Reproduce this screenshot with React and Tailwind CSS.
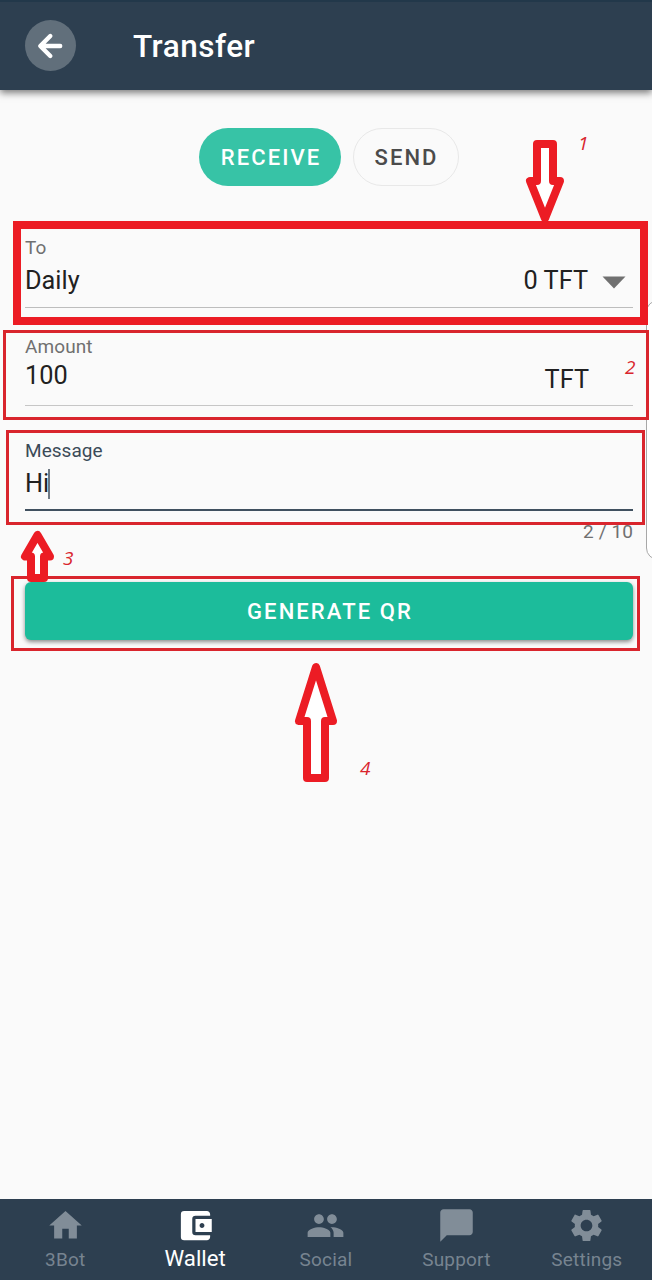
import React from "react";
import { MdHome, MdAccountBalanceWallet, MdPeople, MdChatBubble, MdSettings } from "react-icons/md";

const tabs = [
  { label: "3Bot", Icon: MdHome },
  { label: "Wallet", Icon: MdAccountBalanceWallet, active: true },
  { label: "Social", Icon: MdPeople },
  { label: "Support", Icon: MdChatBubble },
  { label: "Settings", Icon: MdSettings },
];

const numberClass = "absolute font-['Open_Sans',sans-serif] text-[19px] leading-[24px] italic text-[#d9252d]";

function Header() {
  return (
    <header className="relative flex h-[90px] shrink-0 items-center border-t-2 border-[#22384a] bg-[#2d3f50] pl-[25px] shadow-[0_3px_7px_rgba(0,0,0,0.5)]">
      <button className="-mt-px flex size-[51px] items-center justify-center rounded-full bg-[#616f7b]">
        <svg className="-ml-px" width="28" height="28" viewBox="0 0 28 28" fill="none" stroke="white" strokeWidth="4.4" strokeLinecap="round" strokeLinejoin="round">
          <path d="M14.3 4 4.3 14 14.3 24M5 14H24.2" />
        </svg>
      </button>
      <h1 className="mt-px ml-[57px] text-[31.5px] leading-[36px] font-medium tracking-[0.5px] text-white">Transfer</h1>
    </header>
  );
}

function Annotations() {
  return (
    <div className="pointer-events-none absolute inset-0 overflow-hidden">
      <div className="absolute top-[300px] left-[646px] h-[260px] w-[40px] rounded-[12px] border border-[#a8a8a8] bg-white" />
      <div className="absolute top-[221px] left-[13px] h-[104px] w-[635px] border-8 border-[#ec1c24]" />
      <div className="absolute top-[330px] left-[3px] h-[90px] w-[646px] border-3 border-[#d9252d]" />
      <div className="absolute top-[430px] left-[6px] h-[95px] w-[639px] border-3 border-[#d9252d]" />
      <div className="absolute top-[576px] left-[11px] h-[75px] w-[629px] border-3 border-[#d9252d]" />
      <svg className="absolute inset-0" width="652" height="1280" fill="#ffffff" stroke="#ec1c24" strokeWidth="8" strokeLinejoin="round">
        <path d="M537 144H553V181H560L545 218.5L530 181H537Z" />
        <path d="M37.5 535 25 556.5H31V578H44V556.5H50Z" />
        <path d="M316 667 299 721H307V778H325V721H333Z" />
      </svg>
      <span className={numberClass + " top-[131px] left-[578px]"}>1</span>
      <span className={numberClass + " top-[355px] left-[625px]"}>2</span>
      <span className={numberClass + " top-[546px] left-[63px]"}>3</span>
      <span className={numberClass + " top-[756px] left-[360px]"}>4</span>
    </div>
  );
}

export default function App() {
  return (
    <div className="relative flex h-[1280px] w-[652px] flex-col overflow-hidden bg-[#fafafa] font-[Roboto,sans-serif] text-[#212121]">
      <Header />
      <main className="flex grow flex-col pt-[38px] pr-[19px] pl-[25px]">
        <div className="flex gap-[12px] pl-[174px] text-[22px] font-medium tracking-[2.05px]">
          <button className="flex h-[58px] w-[142px] items-center justify-center rounded-full bg-[#37c3a6] pl-[2px] text-white">RECEIVE</button>
          <button className="flex h-[58px] w-[106px] items-center justify-center rounded-full border border-[#e8e8e8] pl-px text-[#4b4b4b]">SEND</button>
        </div>

        <div className="mt-[51px] flex h-[71px] flex-col border-b border-[#bdbdbd]">
          <label className="text-[19px] leading-[22px] text-[#707070]">To</label>
          <div className="mt-[7px] flex items-center text-[25.3px] leading-[30px]">
            <span className="grow">Daily</span>
            <span>0 TFT</span>
            <svg className="mt-[3px] mr-[7px] ml-[14px]" width="24" height="13" fill="#707070"><path d="M0.5 0.5H23.5L12 12.5Z" /></svg>
          </div>
        </div>

        <div className="mt-[28px] flex h-[70px] flex-col border-b border-[#c6c6c6]">
          <label className="text-[19px] leading-[22px] tracking-[0.1px] text-[#707070]">Amount</label>
          <div className="flex justify-between pr-[44px] text-[25.3px] leading-[30px]">
            <span className="pt-[3px]">100</span>
            <span className="pt-[7px]">TFT</span>
          </div>
        </div>

        <div className="mt-[34px] flex h-[71px] flex-col border-b-2 border-[#40505f]">
          <label className="text-[19px] leading-[22px] tracking-[0.05px] text-[#3b4a58]">Message</label>
          <div className="mt-[7px] flex items-center text-[25.3px] leading-[30px]">
            <span>Hi</span>
            <span className="-ml-px h-[30px] w-[2px] bg-[#6d7883]" />
          </div>
        </div>
        <div className="mt-[10px] self-end text-[19px] leading-[22px] tracking-[0.1px] text-[#707070]">2 / 10</div>

        <button className="mt-[39px] flex h-[58px] items-center justify-center rounded-[6px] bg-[#1cbc9b] pl-[2px] text-[22px] font-medium tracking-[2.1px] text-white shadow-[0_2px_4px_rgba(0,0,0,0.45)]">GENERATE QR</button>
      </main>

      <nav className="grid h-[81px] shrink-0 grid-cols-5 bg-[#2d3f50]">
        {tabs.map(({ label, Icon, active }) => (
          <div key={label} className={active ? "flex flex-col items-center pt-[7px] pr-px text-white" : "flex flex-col items-center pt-[7px] text-[#818d98]"}>
            <Icon size={39} />
            <span className={active ? "text-[22.2px] leading-[26px]" : "mt-[4px] text-[19px] leading-[22px] tracking-[0.2px] text-[#778490]"}>{label}</span>
          </div>
        ))}
      </nav>
      <Annotations />
    </div>
  );
}
